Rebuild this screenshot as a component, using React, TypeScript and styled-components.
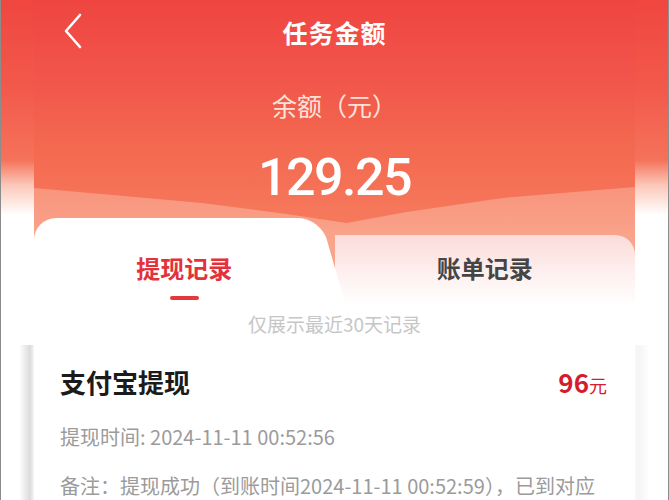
import React from "react";
import styled, { createGlobalStyle } from "styled-components";

const GlobalStyle = createGlobalStyle`
  html, body {
    margin: 0;
    padding: 0;
    height: 100%;
    overflow: hidden;
    background: #fff;
  }
  body {
    font-family: "Noto Sans CJK SC", "Noto Sans", sans-serif;
  }
`;

const Frame = styled.div`
  display: flex;
  width: 669px;
  height: 500px;
  overflow: hidden;
  box-sizing: border-box;
  border-left: 1px solid #8c8c8c;
  border-right: 1px solid #8c8c8c;
`;

const Gutter = styled.div<{ $side: "left" | "right" }>`
  flex: 0 0 33px;
  background:
    linear-gradient(
        to ${(p) => (p.$side === "left" ? "right" : "left")},
        rgba(0, 0, 0, 0) 55%,
        rgba(0, 0, 0, ${(p) => (p.$side === "left" ? 0.14 : 0.04)}) 88%,
        rgba(0, 0, 0, 0.03) 100%
      )
      0 345px / 100% 160px no-repeat,
    linear-gradient(
      to bottom,
      #ef4640 0,
      #f25a4b 90px,
      #f5725a 160px,
      #fbc7b8 185px,
      #ffffff 215px
    );
`;

const Phone = styled.main`
  flex: 1;
  display: flex;
  flex-direction: column;
  background: #fff;
  min-width: 0;
`;

const Header = styled.header`
  position: relative;
  display: flex;
  flex-direction: column;
  align-items: center;
  background: linear-gradient(to bottom, #f8927a 180px, #faa48c 240px);

  &::before {
    content: "";
    position: absolute;
    left: 0;
    right: 0;
    top: 0;
    height: 226px;
    background: linear-gradient(to bottom, #ef4540 0, #f1534a 70px, #f3674f 140px, #f6795c 220px);
    clip-path: polygon(
      0 0,
      100% 0,
      100% 187px,
      78% 198px,
      62% 212px,
      52% 223px,
      42% 214px,
      28% 203px,
      0 188px
    );
  }

  > * {
    position: relative;
  }
`;

const NavBar = styled.div`
  align-self: stretch;
  height: 64px;
  display: flex;
  align-items: center;
  justify-content: center;
  padding: 0 29px;
`;

const BackButton = styled.button`
  position: absolute;
  left: 27px;
  top: 11px;
  width: 24px;
  height: 40px;
  padding: 0;
  border: none;
  background: none;
  display: flex;
  align-items: center;
  justify-content: center;
`;

const Title = styled.h1`
  margin: 0;
  font-size: 25px;
  font-weight: 700;
  color: #fff;
  letter-spacing: 1px;
`;

const BalanceLabel = styled.div`
  margin-top: 26px;
  font-size: 25px;
  line-height: 30px;
  color: #fde3dc;
`;

const Amount = styled.div`
  margin-top: 28px;
  font-family: Roboto, "Noto Sans", sans-serif;
  font-weight: 500;
  font-size: 52px;
  line-height: 60px;
  letter-spacing: -1.5px;
  color: #fff;
`;

const TabBar = styled.div`
  align-self: stretch;
  margin-top: 10px;
  display: grid;
  grid-template-columns: 1fr 1fr;
  align-items: end;
`;

const Tab = styled.div<{ $active?: boolean }>`
  position: relative;
  display: flex;
  flex-direction: column;
  align-items: center;
  box-sizing: border-box;
  height: ${(p) => (p.$active ? 92 : 75)}px;
  padding-top: ${(p) => (p.$active ? 35 : 18)}px;
  padding-left: ${(p) => (p.$active ? 36 : 0)}px;
  margin-right: ${(p) => (p.$active ? 36 : 0)}px;
  z-index: ${(p) => (p.$active ? 2 : 1)};
  font-size: 24px;
  line-height: 30px;
  font-weight: 700;
  color: ${(p) => (p.$active ? "#e3323b" : "#454545")};
  background: ${(p) =>
    p.$active ? "#fff" : "linear-gradient(to bottom, #fbdcd9 0, #fdeeed 35px, #fff 70px)"};
  border-radius: ${(p) => (p.$active ? "22px 0 0 0" : "0 20px 0 0")};

  &::after {
    content: ${(p) => (p.$active ? '""' : "none")};
    position: absolute;
    top: 0;
    bottom: 0;
    right: -48px;
    width: 84px;
    background: #fff;
    border-top-right-radius: 22px;
    transform: skewX(16deg);
    transform-origin: bottom;
  }
`;

const TabLabel = styled.span`
  position: relative;
  z-index: 1;
`;

const Underline = styled.i`
  position: relative;
  z-index: 1;
  display: block;
  width: 29px;
  height: 4px;
  margin-top: 13px;
  border-radius: 2px;
  background: #e23a3a;
`;

const Body = styled.section`
  display: flex;
  flex-direction: column;
  padding: 0 26px;
`;

const Hint = styled.div`
  margin-top: 1px;
  align-self: center;
  font-size: 19px;
  line-height: 26px;
  color: #c6c6c6;
`;

const RecordHead = styled.div`
  margin-top: 27px;
  display: flex;
  align-items: baseline;
  justify-content: space-between;
  line-height: 36px;
`;

const RecordTitle = styled.div`
  font-size: 26px;
  font-weight: 700;
  color: #1b1b1b;
`;

const RecordAmount = styled.div`
  color: #d51c2e;
  font-size: 26px;
  font-weight: 700;
  margin-right: 2px;

  small {
    font-size: 18px;
    font-weight: 400;
  }
`;

const Meta = styled.div<{ $gap: number }>`
  margin-top: ${(p) => p.$gap}px;
  font-size: 20px;
  line-height: 28px;
  color: #9b9b9b;
`;

function BackIcon() {
  return (
    <svg width="20" height="36" viewBox="0 0 20 36" fill="none">
      <path d="M17 2 L3 18 L17 34" stroke="#fff" strokeWidth="2.6" strokeLinecap="round" strokeLinejoin="round" />
    </svg>
  );
}

export default function App() {
  return (
    <Frame>
      <GlobalStyle />
      <Gutter $side="left" />
      <Phone>
        <Header>
          <NavBar>
            <BackButton aria-label="返回">
              <BackIcon />
            </BackButton>
            <Title>任务金额</Title>
          </NavBar>
          <BalanceLabel>余额（元）</BalanceLabel>
          <Amount>129.25</Amount>
          <TabBar>
            <Tab $active>
              <TabLabel>提现记录</TabLabel>
              <Underline />
            </Tab>
            <Tab>
              <TabLabel>账单记录</TabLabel>
            </Tab>
          </TabBar>
        </Header>
        <Body>
          <Hint>仅展示最近30天记录</Hint>
          <RecordHead>
            <RecordTitle>支付宝提现</RecordTitle>
            <RecordAmount>
              96<small>元</small>
            </RecordAmount>
          </RecordHead>
          <Meta $gap={20}>提现时间: 2024-11-11 00:52:56</Meta>
          <Meta $gap={21}>备注：提现成功（到账时间2024-11-11 00:52:59），已到对应支付宝账户</Meta>
        </Body>
      </Phone>
      <Gutter $side="right" />
    </Frame>
  );
}
